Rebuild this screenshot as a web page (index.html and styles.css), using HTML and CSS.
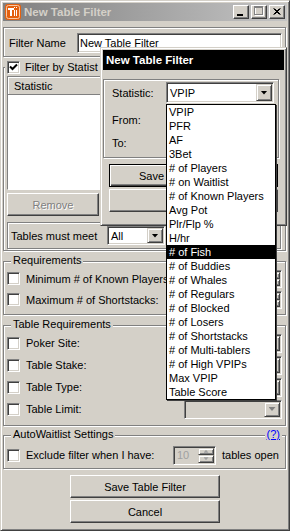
FILE: index.html
```html
<!DOCTYPE html>
<html>
<head>
<meta charset="utf-8">
<title>New Table Filter</title>
<link rel="stylesheet" href="styles.css">
</head>
<body>
<div class="window">
  <div class="titlebar">
    <svg class="appicon" width="16" height="16" viewBox="0 0 16 16">
      <rect x="0" y="0" width="16" height="16" rx="3" fill="#e4600e"/>
      <rect x="1.5" y="1.5" width="13" height="13" rx="2" fill="none" stroke="#f7c9a4" stroke-width="1"/>
      <rect x="3" y="4" width="6" height="2" fill="#fff"/>
      <rect x="5" y="4" width="2" height="8" fill="#fff"/>
      <rect x="9" y="3" width="1" height="1" fill="#fff"/>
      <rect x="9" y="6" width="1" height="6" fill="#fff"/>
      <rect x="11" y="3" width="1" height="1" fill="#fff"/>
      <rect x="11" y="6" width="1" height="6" fill="#fff"/>
    </svg>
    <span class="title">New Table Filter</span>
    <div class="wbtns">
      <div class="wbtn"><svg width="14" height="12" viewBox="0 0 14 12"><rect x="3" y="8" width="6" height="2" fill="#000"/></svg></div>
      <div class="wbtn"><svg width="14" height="12" viewBox="0 0 14 12"><rect x="3.5" y="1.5" width="8" height="8" fill="none" stroke="#fff"/><rect x="2.5" y="0.5" width="8" height="8" fill="none" stroke="#808080"/><rect x="2" y="1" width="9" height="1" fill="#808080"/></svg></div>
      <div class="wbtn"><svg width="14" height="12" viewBox="0 0 14 12"><path d="M3.5 2.5 L9.5 8.5 M4.5 2.5 L10.5 8.5 M9.5 2.5 L3.5 8.5 M10.5 2.5 L4.5 8.5" stroke="#000" stroke-width="1" fill="none"/></svg></div>
    </div>
  </div>

  <div class="client">
    <div class="etched namebox">
      <span class="name-lbl">Filter Name</span>
      <div class="sunken field name-field">New Table Filter</div>
    </div>

    <div class="etched group stat-group">
      <div class="legend stat-legend">
        <span class="cb"><svg width="9" height="9" viewBox="0 0 9 9"><path d="M1 3.5 L3.5 6 L8 1.5" stroke="#000" stroke-width="2" fill="none"/></svg></span>
        <span class="legend-text">Filter by Statist</span>
      </div>
      <div class="left-col">
        <div class="table">
          <div class="th">Statistic</div>
          <div class="tbody"></div>
        </div>
        <div class="btn disabled remove">Remove</div>
      </div>
      <div class="etched meet">
        <span class="meet-lbl">Tables must meet</span>
        <div class="combo meet-combo"><span class="combo-val">All</span><span class="arrow-btn"><i class="tri"></i></span></div>
      </div>
    </div>

    <div class="etched group req-group">
      <div class="legend lg-left">Requirements</div>
      <div class="row r21">
        <span class="cb"></span><span class="row-lbl clip-lbl">Minimum # of Known Players:</span>
        <div class="spin spin-req"><div class="spin-field"></div><div class="spin-btns"><span class="sb"></span><span class="sb"></span></div></div>
      </div>
      <div class="row r21">
        <span class="cb"></span><span class="row-lbl">Maximum # of Shortstacks:</span>
        <div class="spin spin-req"><div class="spin-field"></div><div class="spin-btns"><span class="sb"></span><span class="sb"></span></div></div>
      </div>
    </div>

    <div class="etched group treq-group">
      <div class="legend lg-left">Table Requirements</div>
      <div class="row r22">
        <span class="cb"></span><span class="row-lbl">Poker Site:</span>
        <div class="combo dis-combo"><span class="combo-val"></span><span class="arrow-btn"><i class="tri grey"></i></span></div>
      </div>
      <div class="row r22">
        <span class="cb"></span><span class="row-lbl">Table Stake:</span>
        <div class="combo dis-combo"><span class="combo-val"></span><span class="arrow-btn"><i class="tri grey"></i></span></div>
      </div>
      <div class="row r22">
        <span class="cb"></span><span class="row-lbl">Table Type:</span>
        <div class="combo dis-combo"><span class="combo-val"></span><span class="arrow-btn"><i class="tri grey"></i></span></div>
      </div>
      <div class="row r22">
        <span class="cb"></span><span class="row-lbl">Table Limit:</span>
        <div class="combo dis-combo"><span class="combo-val"></span><span class="arrow-btn"><i class="tri grey"></i></span></div>
      </div>
    </div>

    <div class="etched group aw-group">
      <div class="legend lg-left">AutoWaitlist Settings</div>
      <div class="legend lg-right"><span class="help">(?)</span></div>
      <div class="row r22">
        <span class="cb"></span><span class="row-lbl aw-lbl">Exclude filter when I have:</span>
        <div class="spin spin-aw"><div class="spin-field">10</div><div class="spin-btns"><span class="sb"><i class="stri up"></i></span><span class="sb"><i class="stri down"></i></span></div></div>
        <span class="aw-tail">tables open</span>
      </div>
    </div>

    <div class="btn main-btn save-btn">Save Table Filter</div>
    <div class="btn main-btn cancel-btn">Cancel</div>
  </div>

  <div class="dialog">
    <div class="dlg-title">New Table Filter</div>
    <div class="etched dlg-group">
      <div class="drow d1">
        <span class="dlbl">Statistic:</span>
        <div class="combo dcombo"><span class="combo-val">VPIP</span><span class="arrow-btn"><i class="tri"></i></span></div>
      </div>
      <div class="drow d2">
        <span class="dlbl">From:</span>
        <div class="sunken field dfield"></div>
      </div>
      <div class="drow d3">
        <span class="dlbl">To:</span>
        <div class="sunken field dfield"></div>
      </div>
    </div>
    <div class="btn default dlg-btn save-stat"><span>Save</span></div>
    <div class="btn dlg-btn dlg-cancel"></div>
  </div>

  <div class="dropdown">
    <div class="opt">VPIP</div>
    <div class="opt">PFR</div>
    <div class="opt">AF</div>
    <div class="opt">3Bet</div>
    <div class="opt"># of Players</div>
    <div class="opt"># on Waitlist</div>
    <div class="opt"># of Known Players</div>
    <div class="opt">Avg Pot</div>
    <div class="opt">Plr/Flp %</div>
    <div class="opt">H/hr</div>
    <div class="opt sel"># of Fish</div>
    <div class="opt"># of Buddies</div>
    <div class="opt"># of Whales</div>
    <div class="opt"># of Regulars</div>
    <div class="opt"># of Blocked</div>
    <div class="opt"># of Losers</div>
    <div class="opt"># of Shortstacks</div>
    <div class="opt"># of Multi-tablers</div>
    <div class="opt"># of High VPIPs</div>
    <div class="opt">Max VPIP</div>
    <div class="opt">Table Score</div>
  </div>
</div>
</body>
</html>
```

FILE: styles.css
```css
* { box-sizing: border-box; margin: 0; padding: 0; }
body {
  margin: 0;
  background: #d4d0c8;
  font-family: "Liberation Sans", Arial, sans-serif;
  font-size: 11px;
  color: #000;
}

.window {
  position: relative;
  width: 290px;
  height: 531px;
  background: #d4d0c8;
  border: 1px solid;
  border-color: #d4d0c8 #404040 #404040 #d4d0c8;
  box-shadow: inset 1px 1px 0 #fff, inset -1px -1px 0 #808080;
  padding: 2px;
  overflow: hidden;
}

/* title bar */
.titlebar {
  height: 18px;
  display: flex;
  align-items: center;
  padding: 0 2px 0 2px;
  background: linear-gradient(to right, #808080, #c4c4c4);
}
.appicon { flex: none; display: block; }
.title {
  margin-left: 3px;
  font-weight: bold;
  font-size: 11.5px;
  color: #d4d0c8;
}
.wbtns { margin-left: auto; display: flex; gap: 2px; }
.wbtn {
  width: 16px;
  height: 14px;
  background: #d4d0c8;
  border: 1px solid;
  border-color: #fff #404040 #404040 #fff;
  box-shadow: inset -1px -1px 0 #808080;
  display: flex;
}
.wbtn svg { display: block; }

/* shared widgets */
.etched {
  border: 1px solid #808080;
  box-shadow: inset 1px 1px 0 #fff, 1px 1px 0 #fff;
}
.sunken {
  border: 1px solid;
  border-color: #808080 #fff #fff #808080;
  box-shadow: inset 1px 1px 0 #404040, inset -1px -1px 0 #d4d0c8;
  background: #fff;
}
.btn {
  display: flex;
  align-items: center;
  justify-content: center;
  height: 23px;
  background: #d4d0c8;
  border: 1px solid;
  border-color: #fff #404040 #404040 #fff;
  box-shadow: inset -1px -1px 0 #808080;
  white-space: nowrap;
  overflow: hidden;
}
.btn.disabled { color: #808080; text-shadow: 1px 1px 0 #fff; }
.btn.default {
  border: 1px solid #000;
  box-shadow: inset 1px 1px 0 #fff, inset -1px -1px 0 #404040, inset -2px -2px 0 #808080;
}
.cb {
  flex: none;
  width: 13px;
  height: 13px;
  background: #fff;
  border: 1px solid;
  border-color: #808080 #fff #fff #808080;
  box-shadow: inset 1px 1px 0 #404040, inset -1px -1px 0 #d4d0c8;
  display: flex;
  align-items: center;
  justify-content: center;
}
.cb svg { display: block; }

.combo {
  display: flex;
  border: 1px solid;
  border-color: #808080 #fff #fff #808080;
  box-shadow: inset 1px 1px 0 #404040, inset -1px -1px 0 #d4d0c8;
  background: #fff;
  padding: 1px;
}
.combo-val {
  flex: 1;
  padding-left: 2px;
  display: flex;
  align-items: center;
  white-space: nowrap;
  overflow: hidden;
}
.arrow-btn {
  flex: none;
  width: 16px;
  background: #d4d0c8;
  border: 1px solid;
  border-color: #d4d0c8 #404040 #404040 #d4d0c8;
  box-shadow: inset 1px 1px 0 #fff, inset -1px -1px 0 #808080;
  display: flex;
  align-items: center;
  justify-content: center;
}
.tri {
  display: block;
  width: 7px;
  height: 4px;
  background: #000;
  clip-path: polygon(0 0, 100% 0, 50% 100%);
}
.tri.grey { background: #808080; }

.spin {
  display: flex;
  border: 1px solid;
  border-color: #808080 #fff #fff #808080;
  box-shadow: inset 1px 1px 0 #404040, inset -1px -1px 0 #d4d0c8;
  background: #fff;
  padding: 1px;
}
.spin-field { flex: 1; display: flex; align-items: center; padding-left: 2px; }
.spin-btns { flex: none; width: 16px; display: flex; flex-direction: column; }
.sb {
  flex: 1;
  background: #d4d0c8;
  border: 1px solid;
  border-color: #d4d0c8 #404040 #404040 #d4d0c8;
  box-shadow: inset 1px 1px 0 #fff, inset -1px -1px 0 #808080;
  display: flex;
  align-items: center;
  justify-content: center;
}
.stri {
  display: block;
  width: 5px;
  height: 3px;
  background: #a0a0a0;
}
.stri.up { clip-path: polygon(50% 0, 100% 100%, 0 100%); }
.stri.down { clip-path: polygon(0 0, 100% 0, 50% 100%); }

/* client area */
.client { display: flex; flex-direction: column; width: 284px; }

.group { position: relative; width: 283px; }
.legend {
  position: absolute;
  top: -8px;
  height: 13px;
  line-height: 13px;
  background: #d4d0c8;
  padding: 0 2px;
  white-space: nowrap;
  display: flex;
  align-items: center;
}
.lg-left { left: 7px; }
.lg-right { right: 3px; }
.help { color: #0000ff; text-decoration: underline; }

.namebox {
  margin-top: 6px;
  width: 283px;
  height: 30px;
  display: flex;
  align-items: flex-start;
  padding: 5px 3px 0 5px;
}
.name-lbl { width: 68px; line-height: 20px; }
.name-field { width: 205px; height: 20px; padding-left: 2px; line-height: 18px; }

.stat-group {
  margin-top: 10px;
  height: 184px;
  padding: 8px 3px 0 3px;
}
.stat-legend { left: 1px; top: -7px; }
.legend-text { margin-left: 5px; }
.left-col { width: 96px; }
.table {
  width: 96px;
  height: 114px;
  border: 1px solid;
  border-color: #808080 #fff #fff #808080;
  background: #fff;
  display: flex;
  flex-direction: column;
}
.th {
  height: 18px;
  background: #d4d0c8;
  box-shadow: inset 1px 1px 0 #fff;
  border-bottom: 1px solid #808080;
  padding: 2px 0 0 6px;
  line-height: 14px;
}
.tbody { flex: 1; background: #fff; }
.remove { width: 92px; margin-top: 3px; }
.meet {
  margin-top: 6px;
  width: 274px;
  height: 27px;
  display: flex;
  align-items: center;
  padding-left: 3px;
}
.meet-lbl { width: 96px; }
.meet-combo { width: 58px; height: 19px; }

.req-group {
  margin-top: 10px;
  padding: 6px 3px 4px 3px;
}
.row { display: flex; align-items: center; }
.r21 { height: 21px; }
.r22 { height: 22px; }
.row-lbl { margin-left: 6px; white-space: nowrap; }
.clip-lbl { max-width: 140px; overflow: hidden; }
.spin-req { margin-left: auto; width: 62px; height: 18px; }
.treq-group {
  margin-top: 10px;
  padding: 6px 3px 5px 3px;
}
.dis-combo { margin-left: auto; width: 98px; height: 19px; background: #d4d0c8; }

.aw-group {
  margin-top: 9px;
  padding: 8px 3px 2px 3px;
}
.aw-lbl { width: 147px; }
.spin-aw { width: 43px; height: 19px; background: #d4d0c8; }
.spin-aw .spin-field { color: #a0a0a0; }
.aw-tail { margin-left: 6px; white-space: nowrap; }

.main-btn { width: 150px; align-self: center; }
.save-btn { margin-top: 6px; }
.cancel-btn { margin-top: 2px; }

/* overlay dialog */
.dialog {
  position: absolute;
  left: 99px;
  top: 46px;
  width: 187px;
  height: 179px;
  background: #d4d0c8;
  border: 1px solid;
  border-color: #d4d0c8 #404040 #404040 #d4d0c8;
  box-shadow: inset 1px 1px 0 #fff, inset -1px -1px 0 #808080;
  padding: 2px;
  display: flex;
  flex-direction: column;
}
.dlg-title {
  height: 20px;
  background: #000;
  color: #fff;
  font-weight: bold;
  font-size: 11.5px;
  line-height: 20px;
  padding-left: 3px;
  white-space: nowrap;
}
.dlg-group {
  margin-top: 9px;
  width: 176px;
  height: 79px;
  padding: 2px 0 0 8px;
}
.drow { display: flex; align-items: center; height: 21px; }
.d2 { margin-top: 6px; }
.d3 { margin-top: 2px; }
.dlbl { width: 54px; }
.dcombo { width: 108px; height: 21px; }
.dfield { width: 108px; height: 21px; }
.dlg-btn { width: 169px; margin-left: 6px; }
.save-stat { margin-top: 6px; justify-content: flex-start; padding-left: 29px; }
.dlg-cancel { margin-top: 2px; }

/* overlay dropdown list */
.dropdown {
  position: absolute;
  left: 165px;
  top: 103px;
  width: 110px;
  height: 296px;
  background: #fff;
  border: 1px solid #000;
  box-shadow: 1px 1px 0 #404040;
}
.opt {
  height: 14px;
  line-height: 13px;
  padding: 1px 0 0 2px;
  white-space: nowrap;
  overflow: hidden;
}
.opt.sel { background: #000; color: #fff; }
```
